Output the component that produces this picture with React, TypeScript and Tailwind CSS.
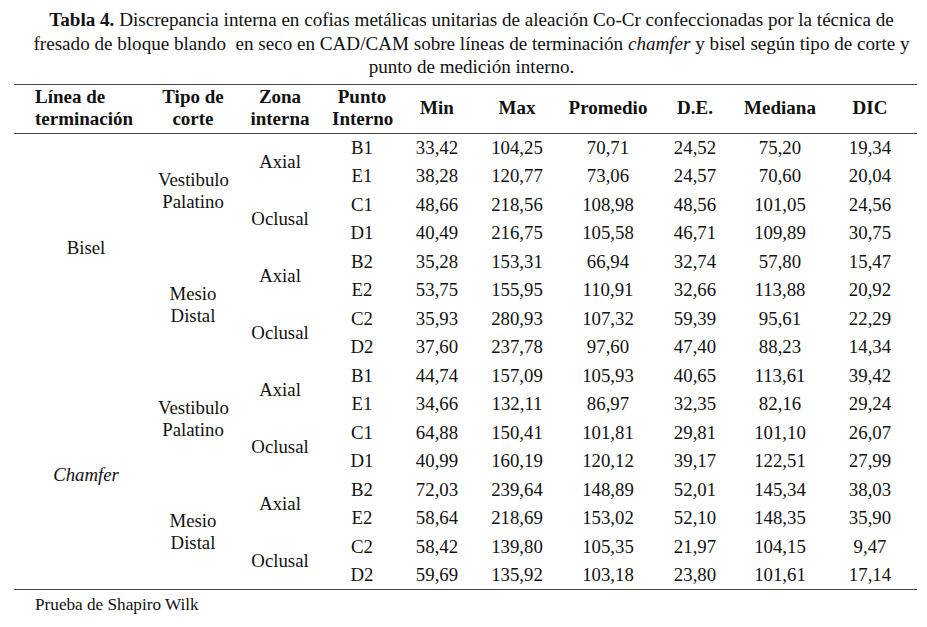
const rows = [
  ["B1", "33,42", "104,25", "70,71", "24,52", "75,20", "19,34"],
  ["E1", "38,28", "120,77", "73,06", "24,57", "70,60", "20,04"],
  ["C1", "48,66", "218,56", "108,98", "48,56", "101,05", "24,56"],
  ["D1", "40,49", "216,75", "105,58", "46,71", "109,89", "30,75"],
  ["B2", "35,28", "153,31", "66,94", "32,74", "57,80", "15,47"],
  ["E2", "53,75", "155,95", "110,91", "32,66", "113,88", "20,92"],
  ["C2", "35,93", "280,93", "107,32", "59,39", "95,61", "22,29"],
  ["D2", "37,60", "237,78", "97,60", "47,40", "88,23", "14,34"],
  ["B1", "44,74", "157,09", "105,93", "40,65", "113,61", "39,42"],
  ["E1", "34,66", "132,11", "86,97", "32,35", "82,16", "29,24"],
  ["C1", "64,88", "150,41", "101,81", "29,81", "101,10", "26,07"],
  ["D1", "40,99", "160,19", "120,12", "39,17", "122,51", "27,99"],
  ["B2", "72,03", "239,64", "148,89", "52,01", "145,34", "38,03"],
  ["E2", "58,64", "218,69", "153,02", "52,10", "148,35", "35,90"],
  ["C2", "58,42", "139,80", "105,35", "21,97", "104,15", "9,47"],
  ["D2", "59,69", "135,92", "103,18", "23,80", "101,61", "17,14"],
];

const widths = [144, 70, 104, 60, 90, 70, 112, 62, 108, 83];

export default function App() {
  return (
    <div
      className="w-[927px] h-[627px] bg-white text-[#111] overflow-hidden"
      style={{ fontFamily: '"Liberation Serif", "Times New Roman", serif' }}
    >
      <p className="pt-[8px] pl-[16px] text-center text-[19.1px] leading-[23.5px] whitespace-nowrap">
        <b>Tabla 4.</b> Discrepancia interna en cofias metálicas unitarias de aleación Co-Cr confeccionadas por la técnica de
        <br />
        fresado de bloque blando{"\u00a0"} en seco en CAD/CAM sobre líneas de terminación <i>chamfer</i> y bisel según tipo de corte y
        <br />
        punto de medición interno.
      </p>

      <table className="ml-[14px] mt-[5.5px] w-[903px] table-fixed border-collapse">
        <colgroup>
          {widths.map((w, i) => (
            <col key={i} style={{ width: w }} />
          ))}
        </colgroup>
        <thead>
          <tr className="h-[49px] border-t-[1.5px] border-b-[1.5px] border-[#444] text-[19px] leading-[22px] font-bold">
            <th className="p-0 pb-[3px] pl-[21px] text-left font-bold">
              Línea de
              <br />
              terminación
            </th>
            <th className="p-0 pb-[3px] text-center font-bold">
              Tipo de
              <br />
              corte
            </th>
            <th className="p-0 pb-[3px] text-center font-bold">
              Zona
              <br />
              interna
            </th>
            <th className="p-0 pb-[3px] text-center font-bold">
              Punto
              <br />
              Interno
            </th>
            <th className="p-0 pb-[3px] text-center font-bold">Min</th>
            <th className="p-0 pb-[3px] text-center font-bold">Max</th>
            <th className="p-0 pb-[3px] text-center font-bold">Promedio</th>
            <th className="p-0 pb-[3px] text-center font-bold">D.E.</th>
            <th className="p-0 pb-[3px] text-center font-bold">Mediana</th>
            <th className="p-0 pb-[3px] pr-[11px] text-center font-bold">DIC</th>
          </tr>
        </thead>
        <tbody className="text-[18.8px] leading-[22px]">
          {rows.map((r, i) => (
            <tr key={i} className={"h-[28.5px]" + (i === rows.length - 1 ? " border-b-[1.5px] border-[#444]" : "")}>
              {i % 8 === 0 && (
                <td rowSpan={8} className="p-0 text-center">
                  {i === 0 ? "Bisel" : <i>Chamfer</i>}
                </td>
              )}
              {i % 4 === 0 && (
                <td rowSpan={4} className="p-0 text-center">
                  {i % 8 === 0 ? (
                    <>
                      Vestibulo
                      <br />
                      Palatino
                    </>
                  ) : (
                    <>
                      Mesio
                      <br />
                      Distal
                    </>
                  )}
                </td>
              )}
              {i % 2 === 0 && (
                <td rowSpan={2} className="p-0 text-center">
                  {i % 4 === 0 ? "Axial" : "Oclusal"}
                </td>
              )}
              {r.map((v, j) => (
                <td key={j} className={"p-0 text-center" + (j === 6 ? " pr-[11px]" : "")}>
                  {v}
                </td>
              ))}
            </tr>
          ))}
        </tbody>
      </table>

      <p className="pl-[35px] pt-[5px] text-[17.2px] leading-[20px]">Prueba de Shapiro Wilk</p>
    </div>
  );
}
